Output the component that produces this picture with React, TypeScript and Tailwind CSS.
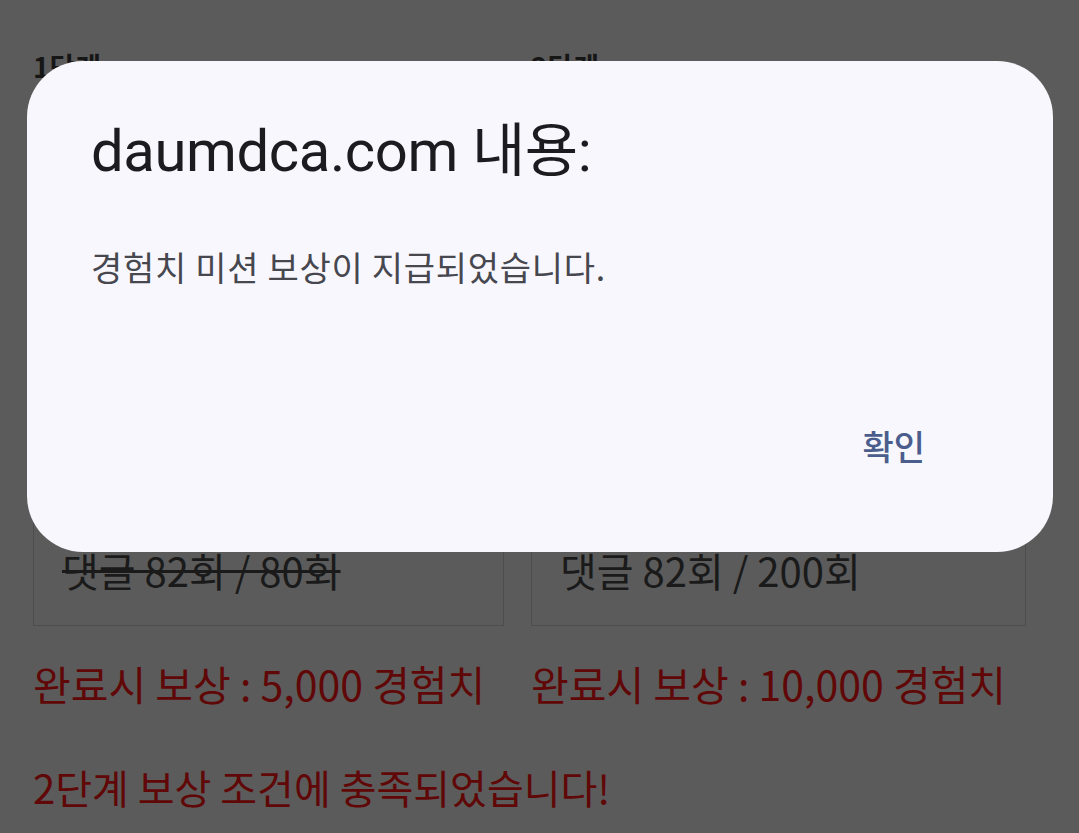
const cjk = { fontFamily: '"Noto Sans CJK KR", "Noto Sans", sans-serif' }

const stages = [
  { title: '1단계', progress: '댓글 82회 / 80회', done: true, reward: '완료시 보상 : 5,000 경험치', width: 'w-[471px]' },
  { title: '2단계', progress: '댓글 82회 / 200회', done: false, reward: '완료시 보상 : 10,000 경험치', width: 'w-[495px]' },
]

export default function App() {
  return (
    <div className="relative w-[1079px] h-[833px] overflow-hidden bg-[#5b5b5b]" style={cjk}>
      {/* page behind the dim */}
      <div className="pl-[33px] pt-[44px]">
        <div className="flex gap-[27px]">
          {stages.map((s) => (
            <div key={s.title} className={`${s.width} flex flex-col`}>
              <div className="text-[28px] font-bold leading-[44px] text-[#161616]">{s.title}</div>
              <div className="mt-[20px] h-[518px] border border-[#4d4d4d] flex flex-col justify-end pb-[29px] pl-[28px]">
                <span className={`text-[40px] leading-[52px] text-[#1a1a1a] ${s.done ? 'line-through decoration-[3px]' : ''}`}>{s.progress}</span>
              </div>
              <div className="mt-[29px] text-[41px] leading-[56px] text-[#600707] whitespace-nowrap">{s.reward}</div>
            </div>
          ))}
        </div>
        <div className="mt-[48px] text-[40px] leading-[56px] text-[#600707]">2단계 보상 조건에 충족되었습니다!</div>
      </div>

      {/* alert dialog */}
      <div className="absolute left-[27px] top-[61px] w-[1026px] h-[491px] rounded-[56px] bg-[#f7f7fd] flex flex-col pl-[64px] pr-[128px]">
        <div className="mt-[54px] text-[58px] leading-[72px] text-[#1c1b20] tracking-[-0.4px]" style={{ fontFamily: 'Roboto, "Noto Sans CJK KR", sans-serif' }}>
          daumdca.com 내용:
        </div>
        <div className="mt-[58px] text-[34px] leading-[44px] text-[#47474f] tracking-[0.7px]">경험치 미션 보상이 지급되었습니다.</div>
        <div className="mt-auto mb-[84px] self-end text-[34px] font-medium leading-[44px] text-[#4b5d8c]">확인</div>
      </div>
    </div>
  )
}
